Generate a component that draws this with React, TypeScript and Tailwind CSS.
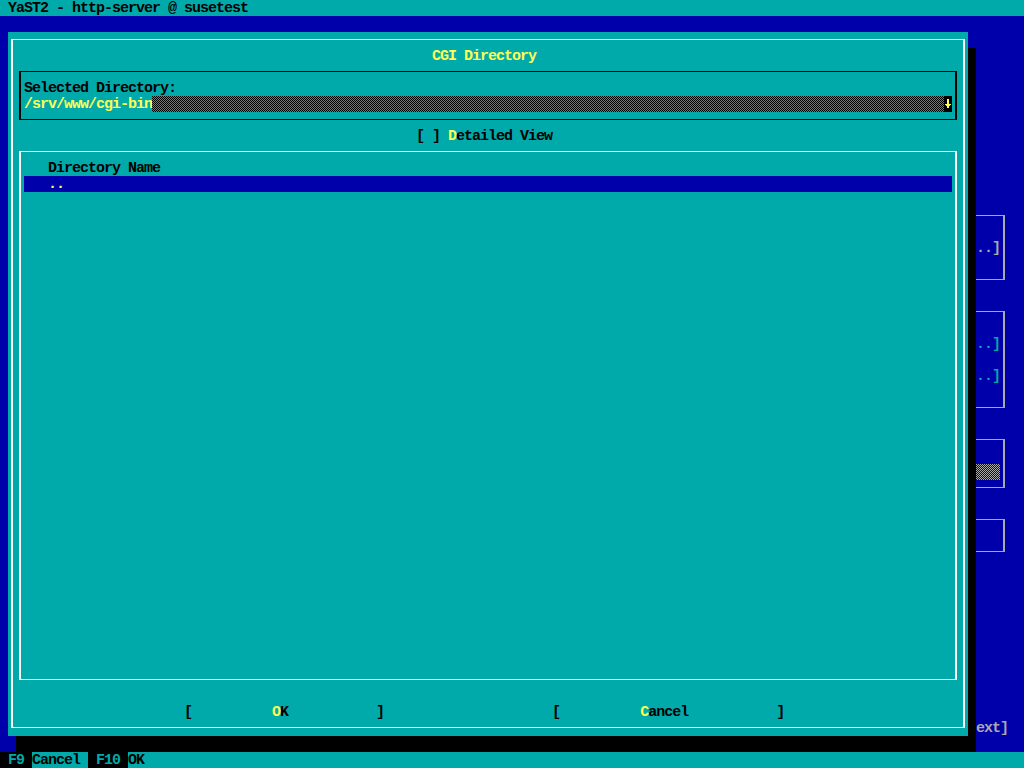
import React from "react";

function Checker({ w, h, a, b, id }: { w: number; h: number; a: string; b: string; id: string }) {
  return (
    <svg width={w} height={h} shapeRendering="crispEdges" className="block shrink-0">
      <defs>
        <pattern id={id} width="2" height="2" patternUnits="userSpaceOnUse">
          <rect width="2" height="2" fill={b} />
          <rect x="0" y="0" width="1" height="1" fill={a} />
          <rect x="1" y="1" width="1" height="1" fill={a} />
        </pattern>
      </defs>
      <rect width={w} height={h} fill={`url(#${id})`} />
    </svg>
  );
}

function DownArrow() {
  return (
    <svg width="8" height="16" shapeRendering="crispEdges" className="block">
      <rect width="8" height="16" fill="#000" />
      <rect x="3" y="3" width="2" height="8" fill="#FFFF55" />
      <rect x="1" y="8" width="6" height="1" fill="#FFFF55" />
      <rect x="2" y="9" width="4" height="1" fill="#FFFF55" />
      <rect x="3" y="10" width="2" height="2" fill="#FFFF55" />
    </svg>
  );
}

export default function App() {
  return (
    <div className="w-[1024px] h-[768px] relative overflow-hidden bg-[#0000AA] font-['Liberation_Mono','DejaVu_Sans_Mono',monospace] font-bold text-[15px] leading-[18px] tracking-[-1px] whitespace-pre">
      {/* background screen */}
      <div className="h-4 bg-[#00AAAA] text-black pl-2">YaST2 - http-server @ susetest</div>
      <div className="h-4" />
      <div className="h-[720px] flex flex-col items-end pr-[19px]">
        <div className="mt-[183px] w-[200px] h-[65px] border-y border-r-2 border-[#AAAAAA] pt-[24px] pr-[3px] text-right text-[#AAAAAA]">
          <div className="h-4">..]</div>
        </div>
        <div className="mt-[31px] w-[200px] h-[97px] border-y border-r-2 border-[#AAAAAA] pt-[24px] pr-[3px] text-right text-[#00AAAA]">
          <div className="h-4">..]</div>
          <div className="h-4 mt-4">..]</div>
        </div>
        <div className="mt-[31px] w-[200px] h-[49px] border-y border-r-2 border-[#AAAAAA] pt-[24px] pr-[3px] flex justify-end items-start">
          <Checker w={24} h={16} a="#AAAAAA" b="#0000AA" id="chk2" />
        </div>
        <div className="mt-[31px] w-[200px] h-[33px] border-y border-r-2 border-[#AAAAAA]" />
        <div className="mt-[168px] h-4 w-8 mr-[-3px] text-[#AAAAAA]">ext]</div>
      </div>
      <div className="h-4 bg-[#00AAAA] flex overflow-hidden">
        <span className="w-8 pl-2 bg-black text-[#00AAAA]">F9</span>
        <span className="w-[56px] text-black">Cancel</span>
        <span className="w-10 pl-2 bg-black text-[#00AAAA]">F10</span>
        <span className="text-black">OK</span>
      </div>

      {/* dialog */}
      <div className="absolute left-2 top-8 w-[960px] h-[704px] bg-[#00AAAA] shadow-[8px_16px_0_0_#000] pt-[7px] pl-[3px]">
        <div className="w-[954px] h-[689px] border-x-2 border-y border-white flex flex-col">
          <div className="mt-2 h-4 pl-[419px] text-[#FFFF55]">CGI Directory</div>
          <div className="mt-[7px] ml-[6px] w-[938px] h-[49px] border-x-2 border-y border-black flex flex-col">
            <div className="mt-2 h-4 pl-[3px] text-black">Selected Directory:</div>
            <div className="h-4 pl-[3px] flex">
              <span className="w-[128px] text-[#FFFF55]">/srv/www/cgi-bin</span>
              <Checker w={792} h={16} a="#000000" b="#00AAAA" id="chk1" />
              <DownArrow />
            </div>
          </div>
          <div className="mt-2 h-4 pl-[403px] text-black">
            [ ] <span className="text-[#FFFF55]">D</span>etailed View
          </div>
          <div className="mt-[7px] ml-[6px] w-[938px] h-[529px] border-x-2 border-y border-white flex flex-col">
            <div className="mt-2 h-4 pl-[27px] text-black">Directory Name</div>
            <div className="h-4 ml-[3px] w-[928px] bg-[#0000AA] pl-[24px] text-[#FFFF55]">..</div>
          </div>
          <div className="mt-6 h-4 pl-[171px] text-black">
            {"[          "}
            <span className="text-[#FFFF55]">O</span>
            {"K           ]                     [          "}
            <span className="text-[#FFFF55]">C</span>
            {"ancel           ]"}
          </div>
        </div>
      </div>
    </div>
  );
}
